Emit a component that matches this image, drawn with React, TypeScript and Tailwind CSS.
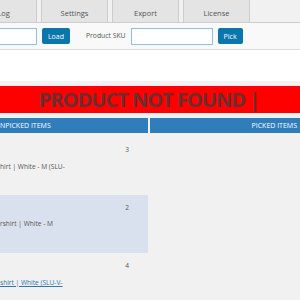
import React from "react";

function Cut({ hidden, shown, className = "" }: { hidden: string; shown: string; className?: string }) {
  return (
    <div className={"flex whitespace-nowrap " + className}>
      <span className="w-0 flex justify-end">{hidden}</span>
      <span>{shown}</span>
    </div>
  );
}

export default function App() {
  const font = { fontFamily: '"Open Sans", "Noto Sans", sans-serif' };
  return (
    <div className="w-[300px] h-[300px] overflow-hidden bg-[#f1f1f1] relative" style={font}>
      {/* Tabs */}
      <div className="h-[23px] flex items-end gap-[4px] -ml-[30px] border-b border-[#cccccc]">
        {["Log", "Settings", "Export", "License"].map((t) => (
          <div key={t} className="w-[67px] h-[23px] shrink-0 bg-[#e4e4e4] border border-t-0 border-b-0 border-[#cccccc] flex items-center justify-center text-[7.5px] text-[#555] pt-[6px]">
            {t}
          </div>
        ))}
      </div>
      {/* Form row */}
      <div className="h-[27px] bg-[#f9f9f9] flex items-center border-b border-[#dddddd]">
        <div className="w-[37px] h-[17px] bg-white border border-[#8ec2e3] border-l-0 shrink-0" />
        <button className="ml-[5px] w-[28px] h-[16px] bg-[#0a76ac] rounded-[2px] text-white text-[7px] leading-none">Load</button>
        <span className="ml-[16px] text-[6.8px] text-[#555] whitespace-nowrap">Product SKU</span>
        <div className="ml-[5px] w-[82px] h-[17px] bg-white border border-[#8ec2e3] shrink-0" />
        <button className="ml-[5px] w-[25px] h-[16px] bg-[#0a76ac] rounded-[2px] text-white text-[7px] leading-none">Pick</button>
      </div>
      {/* White area */}
      <div className="h-[31px] bg-white" />
      {/* Red band */}
      <div className="mt-[5px] h-[27px] bg-[#ff0000] flex items-center justify-center">
        <span className="text-[20px] font-bold text-[#6b2e2e] leading-none tracking-[-1px] ml-[-2px] pt-[1px]">PRODUCT NOT FOUND |</span>
      </div>
      {/* Headers */}
      <div className="mt-[5px] flex gap-[2px]">
        <div className="w-[148px] h-[15px] bg-[#2f7dbb] text-white text-[7px] flex items-center leading-none">
          <Cut hidden="U" shown="NPICKED ITEMS" />
        </div>
        <div className="flex-1 h-[15px] bg-[#2f7dbb] text-white text-[7px] flex items-center justify-end pr-[3px] leading-none">
          PICKED ITEMS
        </div>
      </div>
      {/* Items */}
      <div className="w-[148px] flex flex-col text-[6.6px] text-[#555]">
        <div className="h-[62px] pt-[12px]">
          <div className="text-right pr-[19px] leading-[10px]">3</div>
          <div className="mt-[7px] leading-[10px]">
            <Cut hidden="Sweats" shown="hirt | White - M (SLU-" />
          </div>
        </div>
        <div className="h-[58px] pt-[8px] bg-[#dae1ee]">
          <div className="text-right pr-[19px] leading-[10px]">2</div>
          <div className="mt-[6px] leading-[10px]">
            <Cut hidden="Swate" shown="rshirt | White - M" />
          </div>
        </div>
        <div className="h-[60px] pt-[8px]">
          <div className="text-right pr-[19px] leading-[10px]">4</div>
          <div className="mt-[7px] leading-[10px] text-[#2a76b5]">
            <div className="flex whitespace-nowrap">
              <span className="w-0 flex justify-end underline decoration-1">T-Sh</span>
              <span className="underline decoration-1 underline-offset-1">shirt | White (SLU-V-</span>
            </div>
          </div>
        </div>
      </div>
    </div>
  );
}
